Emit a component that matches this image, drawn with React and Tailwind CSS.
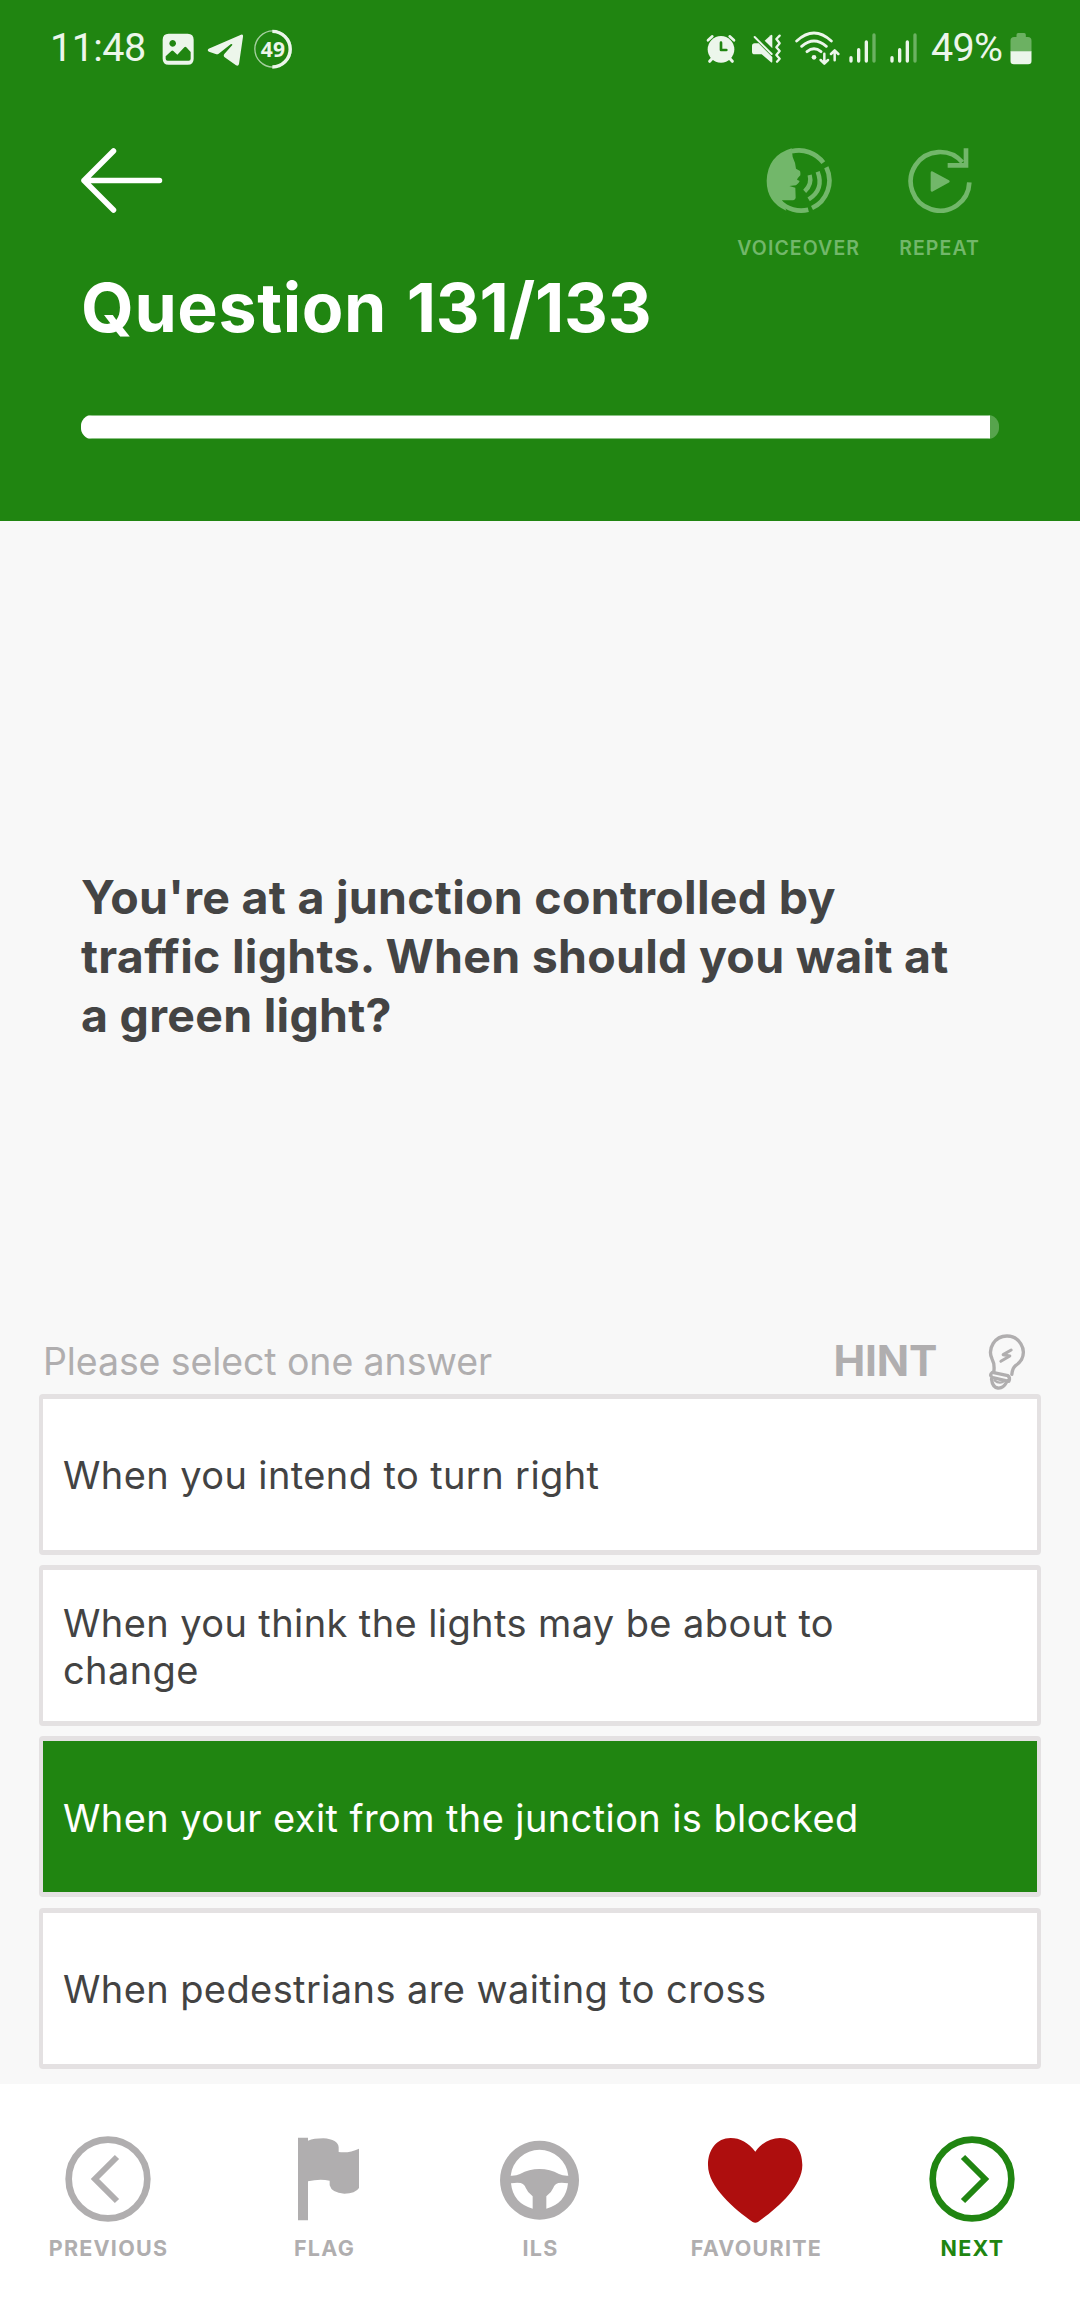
const GREEN = "#208511";
const TINT = "#72b76a";
const GREY = "#b0aeaf";
const STATUS = "#ecf6eb";

/* ---------- status bar icons ---------- */

function PictureIcon() {
  return (
    <svg className="ml-4 h-10 w-8" viewBox="394 55 96 120">
      <path
        fillRule="evenodd"
        fill={STATUS}
        d="M414 69H471Q489 69 489 87V144Q489 162 471 162H414Q396 162 396 144V87Q396 69 414 69ZM426 88A10 10 0 1 0 426.1 88ZM405 137V144Q405 150 411 150H474Q480 150 480 144V124L467 110Q464 107 461 110L440 132L428 121Q425 118 422 121Z"
      />
    </svg>
  );
}

function TelegramIcon() {
  return (
    <svg className="ml-[13px] h-10 w-9" viewBox="528 55 108 120">
      <path
        fill={STATUS}
        d="M630 72Q637 70 636 78L624 160Q622 168 615 164L581 140Q576 135 580 130L604 103Q604 99 599 101L563 129Q559 132 554 130L534 123Q527 119 533 114Z"
      />
    </svg>
  );
}

function BatteryRing() {
  return (
    <div className="relative ml-[10px] flex h-10 w-10 items-center justify-center">
      <svg className="absolute inset-0 h-10 w-10" viewBox="666 55 120 120" fill="none">
        <circle cx="726" cy="115" r="54.500" stroke="#a5d09f" strokeWidth="4" />
        <path d="M724 62A53.500 53.500 0 0 1 724 169" stroke={STATUS} strokeWidth="10" />
      </svg>
      <span className="relative font-['Open_Sans'] text-[21px] leading-[22px] font-bold tracking-[0.3px]">49</span>
    </div>
  );
}

function AlarmIcon() {
  return (
    <svg className="h-10 w-[30px]" viewBox="46 55 90 120" fill="none" stroke={STATUS} strokeLinecap="round">
      <circle cx="91" cy="116" r="40" fill={STATUS} stroke="none" />
      <path d="M52 89L65 77M117 77L130 89" strokeWidth="8" />
      <path d="M64 144L57 152M118 144L125 152" strokeWidth="9" />
      <path d="M91 96V118H107" stroke={GREEN} strokeWidth="8" strokeLinejoin="round" />
    </svg>
  );
}

function MuteIcon() {
  return (
    <svg className="ml-[15px] h-10 w-[31px]" viewBox="181 55 93 120" fill={STATUS}>
      <path d="M184 106Q184 98 192 98H204L245 139V152Q245 158 240 154L213 131H192Q184 131 184 123Z" />
      <path d="M222 90L240 74Q245 70 245 77V113Z" />
      <g fill="none" stroke={STATUS} strokeLinecap="round" strokeLinejoin="round">
        <path d="M192 79L243 130" strokeWidth="6" />
        <path d="M267 75L257 85L267 98L257 110L267 121L257 133L267 144L259 153" strokeWidth="7" />
      </g>
    </svg>
  );
}

function WifiIcon() {
  return (
    <svg className="ml-[13px] h-10 w-[45px]" viewBox="314 55 135 120" fill="none" stroke={STATUS} strokeLinecap="round" strokeLinejoin="round">
      <path d="M319 91Q371 43 423 91M334 107Q371 75 408 107M350 123Q371 106 392 123" strokeWidth="8.500" />
      <circle cx="371" cy="140" r="7" fill={STATUS} stroke="none" />
      <path d="M402 129V158M391 148L402 159L413 148M433 149V120M422 130L433 119L444 130" strokeWidth="7.500" />
    </svg>
  );
}

function SignalIcon({ className }) {
  return (
    <svg className={className} viewBox="477 55 84 120" fill="none" stroke={STATUS} strokeWidth="10" strokeLinecap="round">
      <path d="M483 141V151M506 117V151M529 94V151" />
      <path d="M552 73V151" stroke="#6cb162" />
    </svg>
  );
}

function BatteryIcon() {
  return (
    <svg className="h-10 w-[22px]" viewBox="958.500 55 66 120">
      <path fill="#6cb162" d="M960 123V90Q960 79 971 79H978V72Q978 67 983 67H1001Q1006 67 1006 72V79H1012Q1023 79 1023 90V123Z" />
      <path fill={STATUS} d="M960 122H1023V151Q1023 161 1013 161H970Q960 161 960 151Z" />
    </svg>
  );
}

function StatusBar() {
  return (
    <div className="flex h-[97px] items-center justify-between pr-[48px] pl-[50px] font-['Roboto'] text-[39.5px] leading-10 text-[#ecf6eb]">
      <div className="flex items-center">
        <span className="w-24 pb-[2px] tracking-[-0.55px]">11:48</span>
        <PictureIcon />
        <TelegramIcon />
        <BatteryRing />
      </div>
      <div className="flex items-center">
        <AlarmIcon />
        <MuteIcon />
        <WifiIcon />
        <SignalIcon className="ml-[9px] h-10 w-7" />
        <SignalIcon className="ml-[13px] h-10 w-7" />
        <span className="ml-[13px] w-[79px] pb-[2px] tracking-[-0.7px]">49%</span>
        <BatteryIcon />
      </div>
    </div>
  );
}

/* ---------- header ---------- */

function BackArrow() {
  return (
    <svg className="h-[65px] w-[82px]" viewBox="0 0 82 65" fill="none" stroke="white" strokeWidth="5.500" strokeLinecap="round" strokeLinejoin="round">
      <path d="M32.500 3L3 32.500L32.500 62M3 32.500H78.500" />
    </svg>
  );
}

function VoiceoverIcon() {
  return (
    <svg className="h-[65px] w-[66px]" viewBox="139 53 198 195" fill="none" stroke={TINT} strokeWidth="14">
      <path
        stroke="none"
        fill={TINT}
        d="M216 54L219 80Q228 98 229 115L241 122Q243 127 242 135Q234 143 232 148L240 152Q237 160 229 165L209 167L227 172L228 202Q226 210 216 210H187L200 241Q141 215 141 151Q144 75 216 54Z"
      />
      <path d="M216 63A91 91 0 0 1 311 97" />
      <path d="M320 111A91 91 0 0 1 277 233" />
      <path d="M180 214A91 91 0 0 0 266 238" />
      <path d="M270 134Q278 162 255 183" strokeWidth="13" />
      <path d="M294 124Q314 177 267 207" strokeWidth="13" />
    </svg>
  );
}

function RepeatIcon() {
  return (
    <svg className="h-[65px] w-[66px]" viewBox="559 53 198 195" fill="none" stroke={TINT} strokeWidth="14">
      <path d="M746 156A88 88 0 1 1 725 96" />
      <path d="M736 54V105H681" />
      <path d="M634 127L683 153L634 180Z" fill={TINT} strokeWidth="8" strokeLinejoin="round" />
    </svg>
  );
}

function HeaderAction({ icon, label }) {
  return (
    <button className="flex flex-col items-center">
      {icon}
      <span className="mt-[23px] text-[19.5px] leading-6 font-semibold tracking-[1.1px] text-[#72b76a]">{label}</span>
    </button>
  );
}

function Header() {
  return (
    <header className="h-[521px] bg-[#208511] text-white">
      <StatusBar />
      <div className="mt-[51px] flex items-start justify-between pr-[100px] pl-[81px]">
        <BackArrow />
        <div className="flex gap-[39px]">
          <HeaderAction icon={<VoiceoverIcon />} label="VOICEOVER" />
          <HeaderAction icon={<RepeatIcon />} label="REPEAT" />
        </div>
      </div>
      <h1 className="mt-[7px] pl-[81px] text-[68px] leading-[80px] font-bold tracking-[0.6px] whitespace-nowrap [word-spacing:3px]">
        Question <span className="tracking-[-0.15px]">131/133</span>
      </h1>
      <div className="mx-[81px] mt-[68px] h-6 overflow-hidden rounded-[11px] bg-[#57a44d]">
        <div className="h-full w-[909px] border-y border-[#8cc285] bg-white" />
      </div>
    </header>
  );
}

/* ---------- answers ---------- */

function BulbIcon() {
  return (
    <svg className="mt-[2px] h-[58px] w-[39px]" viewBox="619.500 70 117 174" fill="none" stroke={GREY} strokeWidth="10" strokeLinecap="round" strokeLinejoin="round">
      <path d="M640 186Q643 163 635 149A49 49 0 1 1 723 150Q717 160 705 168Q696 175 694 194" />
      <path d="M636 188L682 198Q690 204 685 215L637 204Q624 197 636 188Z" strokeWidth="10" />
      <path d="M633 208Q636 233 652 235Q668 237 678 218" strokeWidth="10" />
      <path d="M642 212Q654 222 667 217" strokeWidth="7" />
      <path d="M692 121L668 135L688 139L661 155" strokeWidth="9" />
    </svg>
  );
}

const answers = [
  { text: "When you intend to turn right" },
  { text: "When you think the lights may be about to change" },
  { text: "When your exit from the junction is blocked", selected: true },
  { text: "When pedestrians are waiting to cross" },
];

function Answer({ text, selected }) {
  return (
    <button
      className={
        "flex h-[161px] items-center rounded-[4px] border-x-4 border-y-[5px] border-[#e4e1e2] pt-[2px] pr-[140px] pl-5 text-left text-[38px] leading-[46.500px] tracking-[0.4px] " +
        (selected ? "bg-[#208511] text-white" : "bg-white text-[#434343]")
      }
    >
      {text}
    </button>
  );
}

/* ---------- footer ---------- */

function ChevronCircle({ direction, color }) {
  const left = direction === "left";
  return (
    <svg className="h-[90px] w-[100px]" viewBox={left ? "84 70 300 270" : "66 70 300 270"} fill="none" stroke={color}>
      <circle cx={left ? 234 : 216} cy="205" r="118" strokeWidth="20" />
      <path d={left ? "M261 139L195 205L261 271" : "M189 139L255 205L189 271"} strokeWidth="18" />
    </svg>
  );
}

function FlagIcon() {
  return (
    <svg className="h-[90px] w-[100px]" viewBox="732 70 300 270" fill={GREY}>
      <path d="M804 81H834V90Q852 83 880 83Q924 86 926 110V124Q958 128 987 114V232Q976 249 943 249Q905 247 899 224V210Q868 204 834 212V329H804Z" />
    </svg>
  );
}

function WheelIcon() {
  return (
    <svg className="h-[90px] w-[100px]" viewBox="60 70 300 270" fill={GREY}>
      <path
        fillRule="evenodd"
        d="M208.500 90A118.500 118.500 0 1 0 208.600 90ZM122 195A87 87 0 0 1 295 195Q279 196 267 190Q240 175 208.500 175Q177 175 150 190Q138 196 122 195ZM123 218Q140 215 152 217Q163 220 167 231Q173 246 188 257V294Q129 278 123 218ZM294 218Q277 215 265 217Q254 220 250 231Q244 246 229 257V294Q288 278 294 218Z"
      />
    </svg>
  );
}

function HeartIcon() {
  return (
    <svg className="h-[90px] w-[100px]" viewBox="708 70 300 270" fill="#ae0e0e">
      <path d="M856 123C836 96 810 82 782 82C740 82 714 117 714 163C714 230 795 296 848 334Q856 338 864 334C917 296 997 230 997 163C997 117 972 82 930 82C902 82 876 96 856 123Z" />
    </svg>
  );
}

function NavItem({ icon, label, active }) {
  return (
    <button className="flex flex-col items-center">
      {icon}
      <span
        className={
          "mt-3 ml-px text-[21.5px] leading-6 font-bold tracking-[1.25px] " +
          (active ? "text-[#208511]" : "text-[#b0aeaf]")
        }
      >
        {label}
      </span>
    </button>
  );
}

export default function App() {
  return (
    <div className="flex h-[2316px] w-[1080px] flex-col overflow-hidden bg-[#f8f8f8] font-['Inter',sans-serif]">
      <Header />
      <main className="flex flex-1 flex-col">
        <p className="h-[810px] pt-[347px] pr-[100px] pl-[81px] text-[46.5px] leading-[59px] font-bold tracking-[0.27px] text-[#444]">
          You're at a junction controlled by traffic lights. When should you wait at a green light?
        </p>
        <div className="flex h-[63px] items-start justify-between pr-[54px] pl-[43px] text-[#b0aeaf]">
          <span className="text-[37.5px] leading-[61px] tracking-[-0.1px]">Please select one answer</span>
          <div className="flex items-center gap-[50px]">
            <span className="text-[42.5px] leading-[60px] font-bold tracking-[-0.26px]">HINT</span>
            <BulbIcon />
          </div>
        </div>
        <div className="mx-[39px] flex flex-col gap-[10.200px]">
          {answers.map((a) => (
            <Answer key={a.text} {...a} />
          ))}
        </div>
      </main>
      <footer className="grid h-[232px] grid-cols-5 items-start bg-white pt-[50px]">
        <NavItem icon={<ChevronCircle direction="left" color={GREY} />} label="PREVIOUS" />
        <NavItem icon={<FlagIcon />} label="FLAG" />
        <NavItem icon={<WheelIcon />} label="ILS" />
        <NavItem icon={<HeartIcon />} label="FAVOURITE" />
        <NavItem icon={<ChevronCircle direction="right" color={GREEN} />} label="NEXT" active />
      </footer>
    </div>
  );
}
